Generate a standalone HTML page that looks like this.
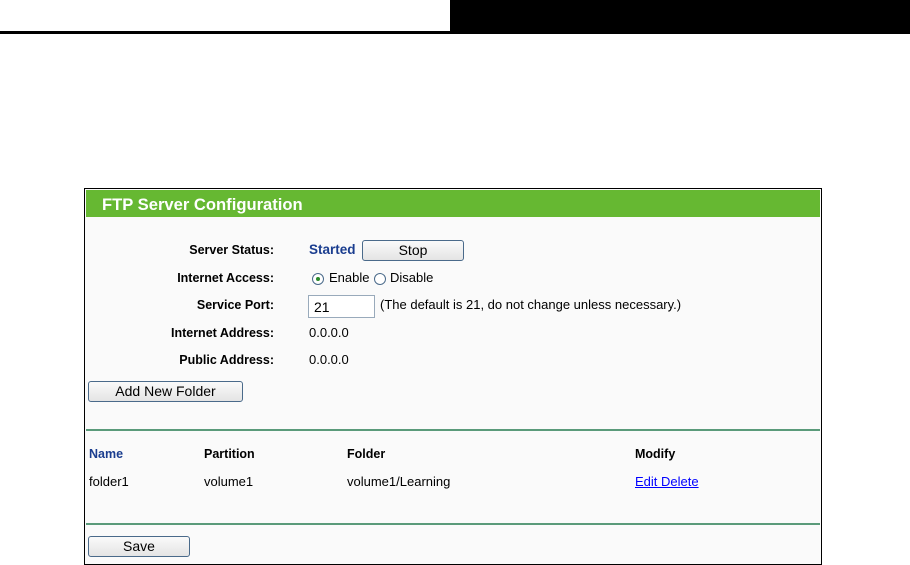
<!DOCTYPE html><html><head><style>
body{margin:0;width:910px;height:564px;background:#fff;position:relative;font-family:"Liberation Sans",Arial,sans-serif;font-size:13px;overflow:hidden}
.a{position:absolute}
.b{font-weight:bold;color:#000;font-size:12.5px}
.btn{position:absolute;border:1px solid #4a6a8a;border-radius:3px;background:linear-gradient(#fafafa,#e4e4e4);font-size:14px;text-align:center;box-sizing:border-box}
.r{position:absolute;width:12px;height:12px;border:1px solid #4a6a8a;border-radius:50%;box-sizing:border-box;background:#fff}
</style></head><body>
<div class="a" style="left:0;top:31px;width:450px;height:3px;background:#000"></div>
<div class="a" style="left:450px;top:0;width:460px;height:34px;background:#000"></div>
<div class="a" style="left:84px;top:188px;width:736px;height:375px;border:1px solid #000;background:#fafafa"></div>
<div class="a" style="left:86px;top:190px;width:734px;height:27px;background:#66b832"></div>
<div class="a" style="left:102px;top:195px;color:#fff;font-weight:bold;font-size:16.6px">FTP Server Configuration</div>
<div class="a b" style="right:636px;top:243px">Server Status:</div>
<div class="a b" style="right:636px;top:271px">Internet Access:</div>
<div class="a b" style="right:636px;top:298px">Service Port:</div>
<div class="a b" style="right:636px;top:326px">Internet Address:</div>
<div class="a b" style="right:636px;top:353px">Public Address:</div>
<div class="a" style="left:309px;top:242px;color:#1a3d8f;font-weight:bold;font-size:13.5px">Started</div>
<div class="btn" style="left:362px;top:240px;width:102px;height:21px;line-height:19px">Stop</div>
<div class="r" style="left:312px;top:273px"></div><div class="a" style="left:316px;top:277px;width:4px;height:4px;border-radius:50%;background:#2a8a2a"></div>
<div class="a" style="left:329px;top:270px">Enable</div>
<div class="r" style="left:374px;top:273px"></div>
<div class="a" style="left:390px;top:270px">Disable</div>
<div class="a" style="left:308px;top:295px;width:67px;height:23px;border:1px solid #9ab;background:#fff;box-sizing:border-box;padding:3px 5px;font-size:14px">21</div>
<div class="a" style="left:380px;top:297px">(The default is 21, do not change unless necessary.)</div>
<div class="a" style="left:309px;top:325px">0.0.0.0</div>
<div class="a" style="left:309px;top:352px">0.0.0.0</div>
<div class="btn" style="left:88px;top:381px;width:155px;height:21px;line-height:19px">Add New Folder</div>
<div class="a" style="left:86px;top:429px;width:734px;height:2px;background:#5a9a7a"></div>
<div class="a b" style="left:89px;top:447px;color:#1a3d8f">Name</div>
<div class="a b" style="left:204px;top:447px">Partition</div>
<div class="a b" style="left:347px;top:447px">Folder</div>
<div class="a b" style="left:635px;top:447px">Modify</div>
<div class="a" style="left:89px;top:474px">folder1</div>
<div class="a" style="left:204px;top:474px">volume1</div>
<div class="a" style="left:347px;top:474px">volume1/Learning</div>
<div class="a" style="left:635px;top:474px;color:#00f;text-decoration:underline">Edit Delete</div>
<div class="a" style="left:86px;top:523px;width:734px;height:2px;background:#5a9a7a"></div>
<div class="btn" style="left:88px;top:536px;width:102px;height:21px;line-height:19px">Save</div>
</body></html>
